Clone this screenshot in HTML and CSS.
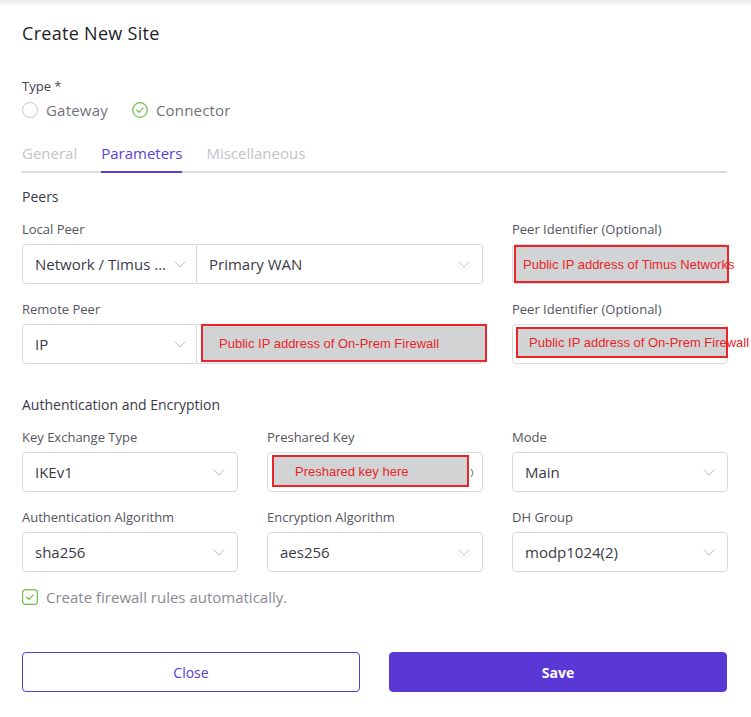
FILE: index.html
```html
<!DOCTYPE html>
<html>
<head>
<meta charset="utf-8">
<link rel="stylesheet" href="styles.css">
</head>
<body>
<div class="topshade"></div>
<div class="modal">
  <h1 class="title">Create New Site</h1>

  <div class="type-label">Type *</div>
  <div class="radios">
    <label class="radio">
      <span class="circle"></span>
      <span>Gateway</span>
    </label>
    <label class="radio">
      <svg class="check-circle" width="16" height="16" viewBox="0 0 16 16"><circle cx="8" cy="8" r="7.3" fill="none" stroke="#6cc04a" stroke-width="1.2"/><path d="M4.8 8.2 L7 10.3 L11.2 5.9" fill="none" stroke="#6cc04a" stroke-width="1.2" stroke-linecap="round" stroke-linejoin="round"/></svg>
      <span>Connector</span>
    </label>
  </div>

  <div class="tabs">
    <div class="tab">General</div>
    <div class="tab active">Parameters</div>
    <div class="tab">Miscellaneous</div>
  </div>

  <div class="section-title peers">Peers</div>

  <div class="grid">
    <div class="field span2">
      <div class="label">Local Peer</div>
      <div class="combo">
        <div class="select part1"><span>Network / Timus ...</span><svg class="chev" width="12" height="7" viewBox="0 0 12 7"><path d="M0.6 0.6 L6 6 L11.4 0.6" fill="none" stroke="#c4c4c8" stroke-width="1"/></svg></div>
        <div class="select part2"><span>Primary WAN</span><svg class="chev" width="12" height="7" viewBox="0 0 12 7"><path d="M0.6 0.6 L6 6 L11.4 0.6" fill="none" stroke="#c4c4c8" stroke-width="1"/></svg></div>
      </div>
    </div>
    <div class="field">
      <div class="label">Peer Identifier (Optional)</div>
      <div class="input">
        <div class="annot a1"><span>Public IP address of Timus Networks</span></div>
      </div>
    </div>

    <div class="field span2 row2">
      <div class="label">Remote Peer</div>
      <div class="combo">
        <div class="select part1"><span>IP</span><svg class="chev" width="12" height="7" viewBox="0 0 12 7"><path d="M0.6 0.6 L6 6 L11.4 0.6" fill="none" stroke="#c4c4c8" stroke-width="1"/></svg></div>
        <div class="select part2 plain">
          <div class="annot a2"><span>Public IP address of On-Prem Firewall</span></div>
        </div>
      </div>
    </div>
    <div class="field row2">
      <div class="label">Peer Identifier (Optional)</div>
      <div class="input">
        <div class="annot a3"><span>Public IP address of On-Prem Firewall</span></div>
      </div>
    </div>
  </div>

  <div class="section-title auth">Authentication and Encryption</div>

  <div class="grid">
    <div class="field">
      <div class="label">Key Exchange Type</div>
      <div class="select"><span>IKEv1</span><svg class="chev" width="12" height="7" viewBox="0 0 12 7"><path d="M0.6 0.6 L6 6 L11.4 0.6" fill="none" stroke="#c4c4c8" stroke-width="1"/></svg></div>
    </div>
    <div class="field">
      <div class="label">Preshared Key</div>
      <div class="input">
        <svg class="eye" width="6" height="10" viewBox="0 0 6 10"><path d="M0.8 0.8 Q4.8 5 0.8 9.2" fill="none" stroke="#8a8a96" stroke-width="1.1"/></svg>
        <div class="annot a4"><span>Preshared key here</span></div>
      </div>
    </div>
    <div class="field">
      <div class="label">Mode</div>
      <div class="select"><span>Main</span><svg class="chev" width="12" height="7" viewBox="0 0 12 7"><path d="M0.6 0.6 L6 6 L11.4 0.6" fill="none" stroke="#c4c4c8" stroke-width="1"/></svg></div>
    </div>

    <div class="field row2">
      <div class="label">Authentication Algorithm</div>
      <div class="select"><span>sha256</span><svg class="chev" width="12" height="7" viewBox="0 0 12 7"><path d="M0.6 0.6 L6 6 L11.4 0.6" fill="none" stroke="#c4c4c8" stroke-width="1"/></svg></div>
    </div>
    <div class="field row2">
      <div class="label">Encryption Algorithm</div>
      <div class="select"><span>aes256</span><svg class="chev" width="12" height="7" viewBox="0 0 12 7"><path d="M0.6 0.6 L6 6 L11.4 0.6" fill="none" stroke="#c4c4c8" stroke-width="1"/></svg></div>
    </div>
    <div class="field row2">
      <div class="label">DH Group</div>
      <div class="select"><span>modp1024(2)</span><svg class="chev" width="12" height="7" viewBox="0 0 12 7"><path d="M0.6 0.6 L6 6 L11.4 0.6" fill="none" stroke="#c4c4c8" stroke-width="1"/></svg></div>
    </div>
  </div>

  <label class="checkbox">
    <svg width="16" height="16" viewBox="0 0 16 16"><rect x="0.6" y="0.6" width="14.8" height="14.8" rx="3.5" fill="none" stroke="#6cc04a" stroke-width="1.2"/><path d="M4.6 8.2 L7 10.4 L11.3 5.8" fill="none" stroke="#6cc04a" stroke-width="1.2" stroke-linecap="round" stroke-linejoin="round"/></svg>
    <span>Create firewall rules automatically.</span>
  </label>

  <div class="buttons">
    <button class="btn btn-close">Close</button>
    <button class="btn btn-save">Save</button>
  </div>
</div>
</body>
</html>
```

FILE: styles.css
```css
* { box-sizing: border-box; }
html, body {
  margin: 0;
  padding: 0;
  background: #ffffff;
}
body {
  font-family: "Open Sans", "Noto Sans", sans-serif;
  color: #3b3a48;
  position: relative;
  width: 751px;
  height: 717px;
  overflow: hidden;
}
.topshade {
  height: 7px;
  background: linear-gradient(to bottom, #ececec, #ffffff);
}
.modal {
  padding: 14px 24px 0 22px;
}
.title {
  margin: 0;
  font-size: 18px;
  font-weight: 500;
  line-height: 24px;
  color: #1e1d2a;
  letter-spacing: 0.3px;
}
.type-label {
  margin-top: 31px;
  font-size: 13px;
  line-height: 20px;
  color: #44434f;
}
.radios {
  display: flex;
  gap: 24px;
  margin-top: 4px;
  height: 20px;
}
.radio {
  display: flex;
  align-items: center;
  gap: 8px;
  font-size: 15px;
  color: #72717e;
  letter-spacing: 0.2px;
}
.circle {
  width: 16px;
  height: 16px;
  border: 1px solid #c8c8cc;
  border-radius: 50%;
}
.tabs {
  display: flex;
  gap: 24px;
  margin-top: 23px;
  border-bottom: 2px solid #dcdce0;
}
.tab {
  font-size: 15px;
  line-height: 20px;
  padding-bottom: 8px;
  color: #c3c3ca;
  margin-bottom: -2px;
  border-bottom: 2px solid transparent;
}
.tab.active {
  color: #5b3fd9;
  border-bottom-color: #5b3fd9;
}
.section-title {
  font-size: 14px;
  line-height: 20px;
  color: #3b3a48;
}
.section-title.peers { margin-top: 14px; }
.section-title.auth { margin-top: 31px; }
.grid {
  display: grid;
  grid-template-columns: repeat(3, 216px);
  column-gap: 29px;
  margin-top: 12px;
}
.field.span2 { grid-column: span 2; }
.field.row2 { margin-top: 15px; }
.label {
  font-size: 13px;
  line-height: 20px;
  color: #55545f;
  margin-bottom: 5px;
}
.combo {
  display: flex;
  height: 40px;
}
.select, .input {
  position: relative;
  height: 40px;
  border: 1px solid #dadade;
  border-radius: 4px;
  display: flex;
  align-items: center;
  justify-content: space-between;
  padding: 0 12px 0 12px;
  font-size: 15px;
  color: #3b3a48;
}
.combo .part1 {
  width: 175px;
  border-radius: 4px 0 0 4px;
  flex: none;
  padding-right: 10px;
}
.combo .part2 {
  flex: 1;
  border-left: none;
  border-radius: 0 4px 4px 0;
}
.combo .part2::before {
  content: "";
  position: absolute;
  left: -1px;
  top: 0;
  bottom: 0;
  border-left: 1px solid #dadade;
}
.chev { flex: none; margin-right: 0; }
.annot {
  position: absolute;
  background: #d2d3d4;
  border: 2px solid #e8262a;
  font-family: "Liberation Sans", Arial, sans-serif;
  font-size: 13px;
  color: #e8262a;
  display: flex;
  align-items: center;
  white-space: nowrap;
  overflow: visible;
}
.annot.a1 { left: 1px; top: 0px; width: 215px; height: 38px; padding-left: 7px; }
.annot.a2 { left: 4px; top: -1px; width: 286px; height: 38px; padding-left: 16px; }
.annot.a3 { left: 3px; top: 2px; width: 212px; height: 31px; padding-left: 11px; }
.annot.a4 { left: 4px; top: 2px; width: 197px; height: 32px; padding-left: 21px; }
.eye { position: absolute; right: 6px; top: 15px; z-index: 2; }
.checkbox {
  display: flex;
  align-items: center;
  gap: 8px;
  margin-top: 15px;
  height: 20px;
  font-size: 15px;
  color: #8a8994;
}
.buttons {
  display: grid;
  grid-template-columns: 338px 338px;
  column-gap: 29px;
  margin-top: 45px;
}
.btn {
  height: 40px;
  border-radius: 4px;
  font-family: "Open Sans", "Noto Sans", sans-serif;
  font-size: 14px;
  cursor: pointer;
}
.btn-close {
  background: #ffffff;
  border: 1px solid #5a3bd6;
  color: #5a3bd6;
  font-weight: 500;
}
.btn-save {
  background: #5a38d6;
  border: 1px solid #5a38d6;
  color: #ffffff;
  font-weight: 700;
}
```
